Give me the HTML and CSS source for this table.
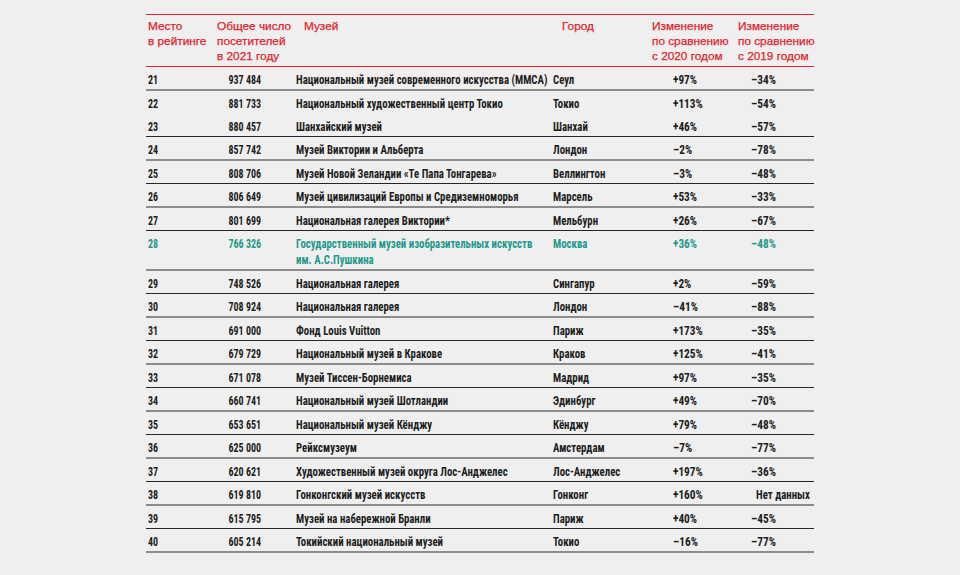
FILE: index.html
```html
<!DOCTYPE html>
<html lang="ru">
<head>
<meta charset="utf-8">
<title>Рейтинг музеев</title>
<link rel="stylesheet" href="styles.css">
</head>
<body>
<div class="page">
<table class="rating">
  <colgroup>
    <col class="c-rank"><col class="c-vis"><col class="c-mus"><col class="c-city"><col class="c-ch20"><col class="c-ch19">
  </colgroup>
  <thead>
    <tr>
      <th>Место<br>в рейтинге</th>
      <th>Общее число<br>посетителей<br>в 2021 году</th>
      <th class="h-mus">Музей</th>
      <th class="h-city">Город</th>
      <th>Изменение<br>по сравнению<br>с 2020 годом</th>
      <th>Изменение<br>по сравнению<br>с 2019 годом</th>
    </tr>
  </thead>
  <tbody>
    <tr class="first"><td><span class="dg">21</span></td><td class="num"><span class="dg">937 484</span></td><td><span class="tx">Национальный музей современного искусства (MMCA)</span></td><td><span class="tx">Сеул</span></td><td class="p20"><span class="pc">+97%</span></td><td class="p19"><span class="pc">–34%</span></td></tr>
    <tr class="noline"><td><span class="dg">22</span></td><td class="num"><span class="dg">881 733</span></td><td><span class="tx">Национальный художественный центр Токио</span></td><td><span class="tx">Токио</span></td><td class="p20"><span class="pc">+113%</span></td><td class="p19"><span class="pc">–54%</span></td></tr>
    <tr><td><span class="dg">23</span></td><td class="num"><span class="dg">880 457</span></td><td><span class="tx">Шанхайский музей</span></td><td><span class="tx">Шанхай</span></td><td class="p20"><span class="pc">+46%</span></td><td class="p19"><span class="pc">–57%</span></td></tr>
    <tr><td><span class="dg">24</span></td><td class="num"><span class="dg">857 742</span></td><td><span class="tx">Музей Виктории и Альберта</span></td><td><span class="tx">Лондон</span></td><td class="p20"><span class="pc">–2%</span></td><td class="p19"><span class="pc">–78%</span></td></tr>
    <tr><td><span class="dg">25</span></td><td class="num"><span class="dg">808 706</span></td><td><span class="tx">Музей Новой Зеландии «Те Папа Тонгарева»</span></td><td><span class="tx">Веллингтон</span></td><td class="p20"><span class="pc">–3%</span></td><td class="p19"><span class="pc">–48%</span></td></tr>
    <tr><td><span class="dg">26</span></td><td class="num"><span class="dg">806 649</span></td><td><span class="tx">Музей цивилизаций Европы и Средиземноморья</span></td><td><span class="tx">Марсель</span></td><td class="p20"><span class="pc">+53%</span></td><td class="p19"><span class="pc">–33%</span></td></tr>
    <tr><td><span class="dg">27</span></td><td class="num"><span class="dg">801 699</span></td><td><span class="tx">Национальная галерея Виктории*</span></td><td><span class="tx">Мельбурн</span></td><td class="p20"><span class="pc">+26%</span></td><td class="p19"><span class="pc">–67%</span></td></tr>
    <tr class="hl"><td><span class="dg">28</span></td><td class="num"><span class="dg">766 326</span></td><td><span class="tx">Государственный музей изобразительных искусств<br>им. А.С.Пушкина</span></td><td><span class="tx">Москва</span></td><td class="p20"><span class="pc">+36%</span></td><td class="p19"><span class="pc">–48%</span></td></tr>
    <tr><td><span class="dg">29</span></td><td class="num"><span class="dg">748 526</span></td><td><span class="tx">Национальная галерея</span></td><td><span class="tx">Сингапур</span></td><td class="p20"><span class="pc">+2%</span></td><td class="p19"><span class="pc">–59%</span></td></tr>
    <tr><td><span class="dg">30</span></td><td class="num"><span class="dg">708 924</span></td><td><span class="tx">Национальная галерея</span></td><td><span class="tx">Лондон</span></td><td class="p20"><span class="pc">–41%</span></td><td class="p19"><span class="pc">–88%</span></td></tr>
    <tr><td><span class="dg">31</span></td><td class="num"><span class="dg">691 000</span></td><td><span class="tx">Фонд Louis Vuitton</span></td><td><span class="tx">Париж</span></td><td class="p20"><span class="pc">+173%</span></td><td class="p19"><span class="pc">–35%</span></td></tr>
    <tr><td><span class="dg">32</span></td><td class="num"><span class="dg">679 729</span></td><td><span class="tx">Национальный музей в Кракове</span></td><td><span class="tx">Краков</span></td><td class="p20"><span class="pc">+125%</span></td><td class="p19"><span class="pc">–41%</span></td></tr>
    <tr><td><span class="dg">33</span></td><td class="num"><span class="dg">671 078</span></td><td><span class="tx">Музей Тиссен-Борнемиса</span></td><td><span class="tx">Мадрид</span></td><td class="p20"><span class="pc">+97%</span></td><td class="p19"><span class="pc">–35%</span></td></tr>
    <tr><td><span class="dg">34</span></td><td class="num"><span class="dg">660 741</span></td><td><span class="tx">Национальный музей Шотландии</span></td><td><span class="tx">Эдинбург</span></td><td class="p20"><span class="pc">+49%</span></td><td class="p19"><span class="pc">–70%</span></td></tr>
    <tr><td><span class="dg">35</span></td><td class="num"><span class="dg">653 651</span></td><td><span class="tx">Национальный музей Кёнджу</span></td><td><span class="tx">Кёнджу</span></td><td class="p20"><span class="pc">+79%</span></td><td class="p19"><span class="pc">–48%</span></td></tr>
    <tr><td><span class="dg">36</span></td><td class="num"><span class="dg">625 000</span></td><td><span class="tx">Рейксмузеум</span></td><td><span class="tx">Амстердам</span></td><td class="p20"><span class="pc">–7%</span></td><td class="p19"><span class="pc">–77%</span></td></tr>
    <tr><td><span class="dg">37</span></td><td class="num"><span class="dg">620 621</span></td><td><span class="tx">Художественный музей округа Лос-Анджелес</span></td><td><span class="tx">Лос-Анджелес</span></td><td class="p20"><span class="pc">+197%</span></td><td class="p19"><span class="pc">–36%</span></td></tr>
    <tr><td><span class="dg">38</span></td><td class="num"><span class="dg">619 810</span></td><td><span class="tx">Гонконгский музей искусств</span></td><td><span class="tx">Гонконг</span></td><td class="p20"><span class="pc">+160%</span></td><td class="p19 nodata"><span class="tx">Нет данных</span></td></tr>
    <tr><td><span class="dg">39</span></td><td class="num"><span class="dg">615 795</span></td><td><span class="tx">Музей на набережной Бранли</span></td><td><span class="tx">Париж</span></td><td class="p20"><span class="pc">+40%</span></td><td class="p19"><span class="pc">–45%</span></td></tr>
    <tr><td><span class="dg">40</span></td><td class="num"><span class="dg">605 214</span></td><td><span class="tx">Токийский национальный музей</span></td><td><span class="tx">Токио</span></td><td class="p20"><span class="pc">–16%</span></td><td class="p19"><span class="pc">–77%</span></td></tr>
  </tbody>
</table>
</div>
</body>
</html>
```

FILE: styles.css
```css
html, body {
  margin: 0;
  padding: 0;
  background: #efefef;
}

.page {
  width: 960px;
  height: 575px;
  padding-top: 14px;
  box-sizing: border-box;
  display: flex;
  justify-content: center;
  overflow: hidden;
}

.rating {
  width: 668px;
  table-layout: fixed;
  border-collapse: separate;
  border-spacing: 0;
  align-self: flex-start;
}

.c-rank { width: 69px; }
.c-vis  { width: 79px; }
.c-mus  { width: 257px; }
.c-city { width: 99px; }
.c-ch20 { width: 86px; }
.c-ch19 { width: 78px; }

.rating th {
  font-family: "Liberation Sans", Arial, sans-serif;
  font-weight: normal;
  font-size: 11.8px;
  line-height: 15px;
  color: #e3222b;
  -webkit-text-stroke: 0.25px #e3222b;
  text-align: left;
  vertical-align: top;
  padding: 4px 0 2px 2px;
  border-top: 1px solid #e3222b;
  border-bottom: 1px solid #e3222b;
  white-space: nowrap;
}

.rating th.h-mus { padding-left: 10px; }
.rating th.h-city { padding-left: 11px; }

.rating td {
  font-family: "Roboto Condensed", "Liberation Sans Narrow", "DejaVu Sans Condensed", sans-serif;
  font-weight: 700;
  font-size: 13.5px;
  line-height: 16px;
  color: #1e1e1e;
  vertical-align: top;
  padding: 4px 0 2px 2px;
  white-space: nowrap;
}

.rating td span {
  display: inline-block;
  transform-origin: left top;
}

.rating .tx { transform: scaleX(0.8); }
.rating .dg { transform: scaleX(0.74); }
.rating .pc { transform: scaleX(0.84); }

.rating td.num {
  text-align: right;
  padding-right: 35px;
}
.rating td.num span { transform-origin: right top; }

.rating td.p20 { padding-left: 23px; }
.rating td.p19 { padding-left: 15px; }
.rating td.nodata { padding-left: 20px; }

.rating tbody tr:nth-child(odd) td { border-bottom: 1px solid #262626; }
.rating tbody tr:nth-child(even) td { border-bottom: 2px solid #8c8c8c; }
.rating tbody tr.first td { border-bottom: 2px solid #8c8c8c; }
.rating tbody tr.noline td { border-bottom: 1px solid transparent; }

.rating tr.hl td { color: #1f9a8b; }
```
